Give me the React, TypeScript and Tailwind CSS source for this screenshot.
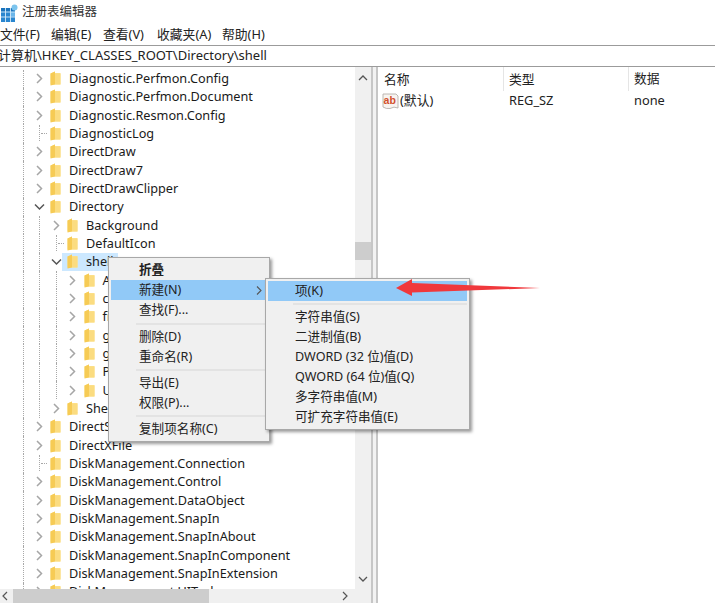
import React from "react";

const cjk = "font-['Noto_Sans','Noto_Sans_CJK_SC',sans-serif]";

function Folder() {
  return (
    <svg width="11" height="15" viewBox="0 0 11 15" className="shrink-0">
      <path d="M0.5 2.5 L5 0.5 L5 2 L10.5 2 L10.5 13.5 L0.5 13.5 Z" fill="#fde28c" />
      <path d="M0.5 2.5 L5 0.5 L5 13.5 L0.5 14.5 Z" fill="#f6cb55" />
      <path d="M5 2.6 L10.5 2.6 L10.5 13.5 L5 13.5 Z" fill="#fbdc80" />
    </svg>
  );
}

function Chevron({ open }: { open?: boolean }) {
  return open ? (
    <svg width="11" height="8" viewBox="0 0 11 8" className="shrink-0">
      <path d="M1 1.5 L5.5 6 L10 1.5" fill="none" stroke="#555" strokeWidth="1.5" />
    </svg>
  ) : (
    <svg width="7" height="11" viewBox="0 0 7 11" className="shrink-0">
      <path d="M1 1 L5.5 5.5 L1 10" fill="none" stroke="#a6a6a6" strokeWidth="1.5" />
    </svg>
  );
}

type Row = { t: string; l: 0 | 1 | 2; kind: "c" | "o" | "n"; sel?: boolean };

const rows: Row[] = [
  { t: "Diagnostic.Perfmon.Config", l: 0, kind: "c" },
  { t: "Diagnostic.Perfmon.Document", l: 0, kind: "c" },
  { t: "Diagnostic.Resmon.Config", l: 0, kind: "c" },
  { t: "DiagnosticLog", l: 0, kind: "n" },
  { t: "DirectDraw", l: 0, kind: "c" },
  { t: "DirectDraw7", l: 0, kind: "c" },
  { t: "DirectDrawClipper", l: 0, kind: "c" },
  { t: "Directory", l: 0, kind: "o" },
  { t: "Background", l: 1, kind: "c" },
  { t: "DefaultIcon", l: 1, kind: "n" },
  { t: "shell", l: 1, kind: "o", sel: true },
  { t: "AddToPlaylist", l: 2, kind: "c" },
  { t: "cmd", l: 2, kind: "c" },
  { t: "find", l: 2, kind: "c" },
  { t: "git_gui", l: 2, kind: "c" },
  { t: "git_shell", l: 2, kind: "c" },
  { t: "Play", l: 2, kind: "c" },
  { t: "UpdateEncryption", l: 2, kind: "c" },
  { t: "ShellEx", l: 1, kind: "c" },
  { t: "DirectShow", l: 0, kind: "c" },
  { t: "DirectXFile", l: 0, kind: "c" },
  { t: "DiskManagement.Connection", l: 0, kind: "n" },
  { t: "DiskManagement.Control", l: 0, kind: "c" },
  { t: "DiskManagement.DataObject", l: 0, kind: "c" },
  { t: "DiskManagement.SnapIn", l: 0, kind: "c" },
  { t: "DiskManagement.SnapInAbout", l: 0, kind: "c" },
  { t: "DiskManagement.SnapInComponent", l: 0, kind: "c" },
  { t: "DiskManagement.SnapInExtension", l: 0, kind: "c" },
  { t: "DiskManagement.UITasks", l: 0, kind: "c" },
];

const indentClass = { 0: "w-[33px]", 1: "w-[50px]", 2: "w-[66.5px]" };

function TreeRow({ r, i }: { r: Row; i: number }) {
  const showG39 = i >= 8 && i <= 18;
  const showG56 = i >= 11 && i <= 17;
  return (
    <div className="relative flex h-[18.33px] items-center text-[12.7px] text-[#1a1a1a]">
      <span className="absolute left-[23px] top-0 h-full border-l border-dotted border-[#a8a8a8]" />
      {showG39 && <span className="absolute left-[39px] top-0 h-full border-l border-dotted border-[#a8a8a8]" />}
      {showG56 && <span className="absolute left-[56px] top-0 h-full border-l border-dotted border-[#a8a8a8]" />}
      <span className={`${indentClass[r.l]} shrink-0`} />
      <span className="relative z-10 flex h-full w-[12px] shrink-0 items-center justify-center bg-white">
        {r.kind === "c" && <Chevron />}
        {r.kind === "o" && <Chevron open />}
        {r.kind === "n" && (
          <>
            <span className="absolute left-[6px] top-[1px] h-[16px] border-l border-dotted border-[#a8a8a8]" />
            <span className="absolute left-[8px] top-[9px] w-[6px] border-t border-dotted border-[#a8a8a8]" />
          </>
        )}
      </span>
      <span className={`flex h-full items-center ${r.sel ? "bg-[#cce8ff]" : ""}`}>
        <span className="ml-[5px] mr-[8px]">
          <Folder />
        </span>
        <span className={`whitespace-nowrap ${r.sel ? "pr-[4px]" : ""}`}>{r.t}</span>
      </span>
    </div>
  );
}

function MenuItem({ label, active, bold, arrow, sub }: { label: string; active?: boolean; bold?: boolean; arrow?: boolean; sub?: boolean }) {
  return (
    <div
      className={`flex h-[20px] items-center whitespace-nowrap text-[12.6px] text-[#222] ${active ? "bg-[#91c9f7]" : ""} ${bold ? "font-bold" : ""} ${sub ? "pl-[27px]" : "pl-[28px]"}`}
    >
      <span className="flex-1">{label}</span>
      {arrow && (
        <svg width="6" height="9" viewBox="0 0 6 9" className="mr-[5px]">
          <path d="M1 0.5 L5 4.5 L1 8.5" fill="none" stroke="#555" strokeWidth="1.1" />
        </svg>
      )}
    </div>
  );
}

function Sep({ roomy }: { roomy?: boolean }) {
  return <div className={`${roomy ? "mt-[3px]" : "mt-[2px]"} mb-[2px] ml-[25px] h-[2px] bg-[#e3e3e3]`} />;
}

export default function App() {
  return (
    <div className={`relative h-[603px] w-[715px] overflow-hidden bg-white ${cjk}`}>
      <div className="flex h-[25px] items-center">
        <svg width="17" height="18" viewBox="0 0 17 18" className="ml-[1px] mr-[4px]">
          <rect x="0" y="4" width="14" height="14" fill="#2a86cf" />
          <rect x="0" y="4" width="14" height="3.5" fill="#1b74bd" />
          <rect x="9.5" y="8" width="4.5" height="4.5" fill="#6bb6ea" />
          <path d="M4.5 4 V18 M9.5 4 V18 M0 8 H14 M0 13 H14" stroke="#d6ebf9" strokeWidth="0.9" />
          <circle cx="13.5" cy="3.5" r="3" fill="#7cc4ee" />
        </svg>
        <span className="text-[12.5px] text-[#333]">注册表编辑器</span>
      </div>

      <div className="flex h-[20px] items-center text-[12.8px] text-[#222]">
        <span className="w-[51px]">文件(F)</span>
        <span className="w-[52px]">编辑(E)</span>
        <span className="w-[54px]">查看(V)</span>
        <span className="w-[65px]">收藏夹(A)</span>
        <span>帮助(H)</span>
      </div>

      <div className="flex h-[22px] items-center overflow-hidden border-y border-[#9b9b9b] text-[13px] text-[#222]">
        <span className="-ml-[2px] whitespace-nowrap">计算机\HKEY_CLASSES_ROOT\Directory\shell</span>
      </div>

      <div className="flex h-[536px]">
        <div className="flex w-[371px] shrink-0 flex-col">
          <div className="flex h-[522px]">
            <div className="h-full w-[355px] shrink-0 overflow-hidden pt-[2.5px]">
              {rows.map((r, i) => (
                <TreeRow key={r.t} r={r} i={i} />
              ))}
            </div>
            <div className="flex h-full w-[16px] flex-col items-center bg-[#f0f0f0] pt-[8px]">
              <svg width="10" height="6" viewBox="0 0 10 6">
                <path d="M1 5 L5 1 L9 5" fill="none" stroke="#555" strokeWidth="1.3" />
              </svg>
              <div className="mt-[161px] h-[18px] w-full bg-[#cdcdcd]" />
              <div className="flex-1" />
              <svg width="10" height="6" viewBox="0 0 10 6" className="mb-[7px]">
                <path d="M1 1 L5 5 L9 1" fill="none" stroke="#555" strokeWidth="1.3" />
              </svg>
            </div>
          </div>
          <div className="flex h-[14px] items-center bg-[#f0f0f0]">
            <svg width="6" height="10" viewBox="0 0 6 10" className="ml-[2px] mr-[5px]">
              <path d="M5 1 L1 5 L5 9" fill="none" stroke="#555" strokeWidth="1.2" />
            </svg>
            <div className="h-full w-[196px] bg-[#cdcdcd]" />
            <div className="flex-1" />
            <svg width="6" height="10" viewBox="0 0 6 10" className="mr-[23px]">
              <path d="M1 1 L5 5 L1 9" fill="none" stroke="#555" strokeWidth="1.2" />
            </svg>
          </div>
        </div>

        <div className="h-full w-[7px] shrink-0 border-x-2 border-x-[#c6c6c6] bg-[#f2f2f2]" />

        <div className="min-w-0 flex-1 text-[12.8px] text-[#222]">
          <div className="flex h-[24px] items-center">
            <span className="h-full w-[126px] border-r border-[#e5e5e5] pl-[6px] leading-[24px]">名称</span>
            <span className="h-full w-[125px] border-r border-[#e5e5e5] pl-[5px] leading-[24px]">类型</span>
            <span className="pl-[5px]">数据</span>
          </div>
          <div className="flex h-[20px] items-center">
            <span className="flex w-[126px] items-center pl-[4px]">
              <svg width="17" height="17" viewBox="0 0 17 17" className="mr-[1px]">
                <path d="M1 1 H14 L16 3 V15 Q12 13 8 15.5 Q4 16 1 14 Z" fill="#f8f4f0" stroke="#b5b0aa" strokeWidth="0.9" />
                <text x="1.6" y="11" fontSize="10.5" fontWeight="700" fill="#d2502c" fontFamily="'Liberation Sans',sans-serif">ab</text>
              </svg>
              (默认)
            </span>
            <span className="w-[125px] pl-[5px]">REG_SZ</span>
            <span className="pl-[5px]">none</span>
          </div>
        </div>
      </div>

      <div className="absolute left-[108px] top-[257px] w-[162px] border border-[#a8a8a8] bg-[#f0f0f0] p-[2px] shadow-[2px_2px_3px_rgba(0,0,0,0.4)]">
        <MenuItem label="折叠" bold />
        <MenuItem label="新建(N)" active arrow />
        <MenuItem label="查找(F)..." />
        <Sep roomy />
        <MenuItem label="删除(D)" />
        <MenuItem label="重命名(R)" />
        <Sep />
        <MenuItem label="导出(E)" />
        <MenuItem label="权限(P)..." />
        <Sep />
        <MenuItem label="复制项名称(C)" />
      </div>

      <div className="absolute left-[265px] top-[278px] w-[205px] border border-[#a8a8a8] bg-[#f0f0f0] p-[2px] shadow-[2px_2px_3px_rgba(0,0,0,0.4)]">
        <MenuItem label="项(K)" active sub />
        <Sep />
        <MenuItem label="字符串值(S)" sub />
        <MenuItem label="二进制值(B)" sub />
        <MenuItem label="DWORD (32 位)值(D)" sub />
        <MenuItem label="QWORD (64 位)值(Q)" sub />
        <MenuItem label="多字符串值(M)" sub />
        <MenuItem label="可扩充字符串值(E)" sub />
      </div>

      <svg width="150" height="20" viewBox="0 0 150 20" className="absolute left-[394px] top-[278px]">
        <path d="M2 10 L18 1 L18 5 L146 10 L18 14.5 L18 18 Z" fill="#f0383c" />
      </svg>
    </div>
  );
}
